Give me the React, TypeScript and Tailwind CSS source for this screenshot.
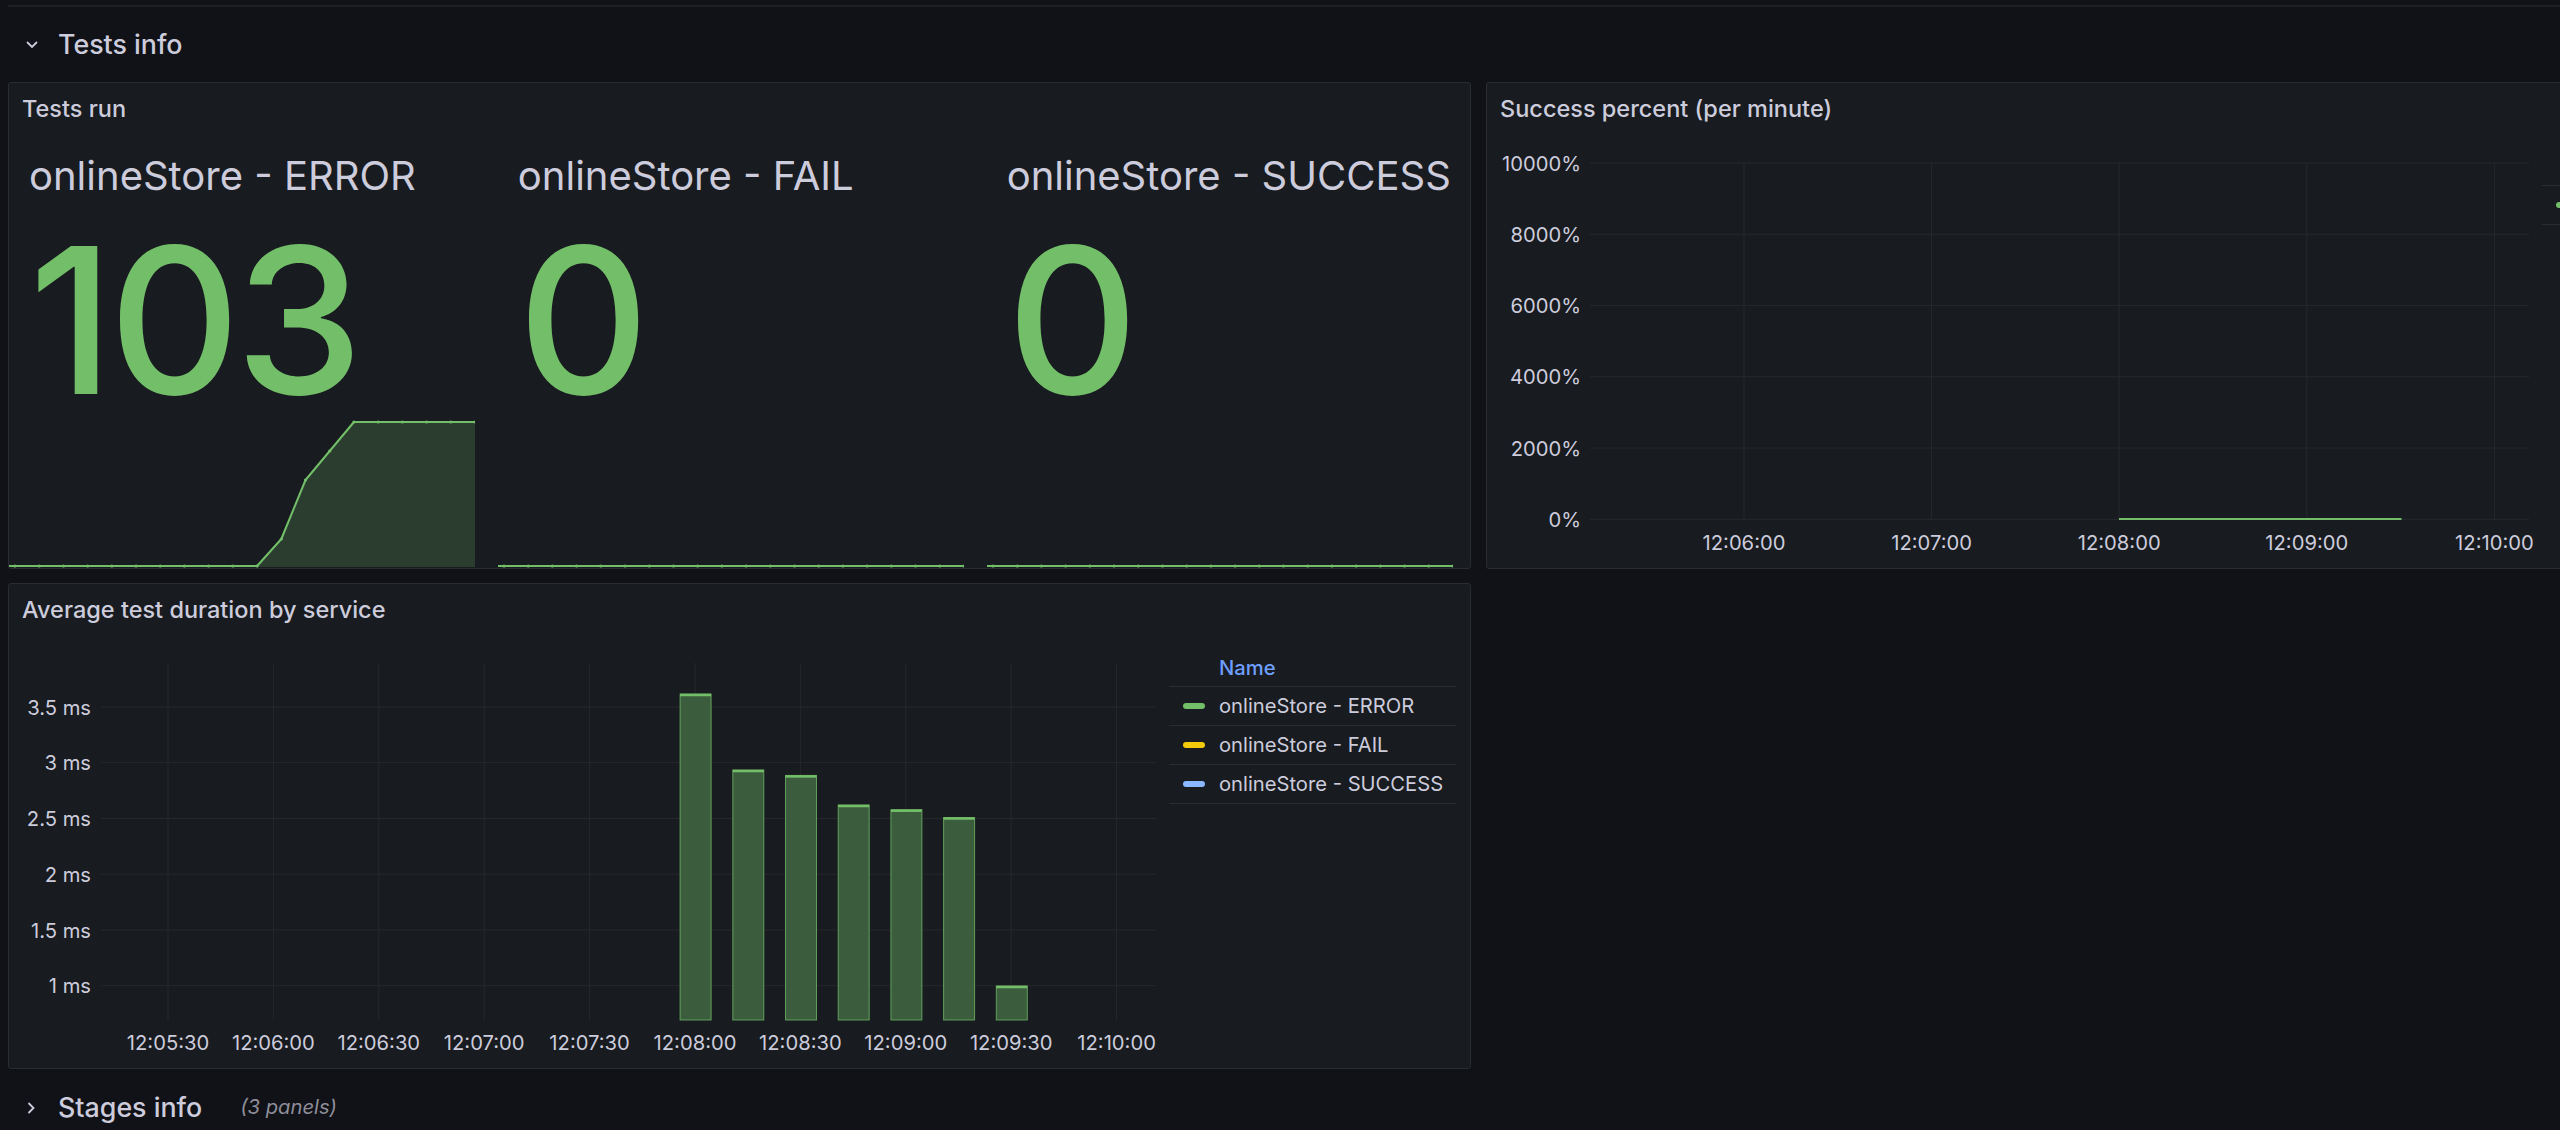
import React from "react";

const GREEN = "#73bf69";
const GRID = "#26282d";
const TEXT = "#ccccdc";

const series = [
  { name: "onlineStore - ERROR", color: "#73bf69" },
  { name: "onlineStore - FAIL", color: "#f2cc0c" },
  { name: "onlineStore - SUCCESS", color: "#8ab8ff" },
];

const successSeries = [{ name: "onlineStore", color: "#73bf69" }];

function RowHeader({ title, open, note }: { title: string; open?: boolean; note?: string }) {
  return (
    <div className="flex h-full items-center pl-[26px]">
      {open ? (
        <svg width="12" height="8" viewBox="0 0 12 8" className="mr-[20px]">
          <path d="M1.5 1.5 L6 6 L10.5 1.5" fill="none" stroke={TEXT} strokeWidth="1.8" strokeLinecap="round" />
        </svg>
      ) : (
        <svg width="9" height="12" viewBox="0 0 9 12" className="mr-[22px] ml-[1px]">
          <path d="M2 1.5 L6.5 6 L2 10.5" fill="none" stroke={TEXT} strokeWidth="1.8" strokeLinecap="round" />
        </svg>
      )}
      <span className="text-[26.8px] font-medium text-[#ccccdc]">{title}</span>
      {note && <span className="ml-[38px] text-[20.2px] italic text-[#8e8e9a]">{note}</span>}
    </div>
  );
}

function Panel({ title, children, className = "" }: { title: string; children: React.ReactNode; className?: string }) {
  return (
    <div className={`flex flex-col overflow-hidden rounded-[3px] border border-[#2a2c31] bg-[#181b1f] ${className}`}>
      <div className="flex h-[51px] shrink-0 items-center pl-[13px] text-[23.5px] font-medium text-[#ccccdc]">{title}</div>
      {children}
    </div>
  );
}

function Legend({ items }: { items: { name: string; color: string }[] }) {
  return (
    <div className="mt-[16px] w-[287px] shrink-0 text-[20.2px] text-[#ccccdc]">
      <div className="flex h-[36px] items-center border-b border-[#2a2c31] pl-[50px] font-medium text-[#6e9fff]">Name</div>
      {items.map((s) => (
        <div key={s.name} className="flex h-[39px] items-center whitespace-nowrap border-b border-[#2a2c31]">
          <span className="ml-[14px] mr-[14px] h-[6px] w-[22px] shrink-0 rounded-full" style={{ background: s.color }} />
          {s.name}
        </div>
      ))}
    </div>
  );
}

function Sparkline({ values }: { values: number[] }) {
  const xs = values.map((_, i) => 6 + 24.21 * i);
  const pts = [`0,${values[0]}`, ...values.map((v, i) => `${xs[i]},${v}`)].join(" ");
  const fill = `0,152 ${pts} ${xs[xs.length - 1]},152`;
  return (
    <svg width="466" height="153" className="mt-auto block">
      <polygon points={fill} fill="#2a3d2e" />
      <polyline points={pts} fill="none" stroke={GREEN} strokeWidth="2" strokeLinejoin="round" />
      {values.map((v, i) => (
        <circle key={i} cx={xs[i]} cy={v} r="1.6" fill={GREEN} />
      ))}
    </svg>
  );
}

const flat = Array.from({ length: 20 }, () => 151);
const errorLine = [151, 151, 151, 151, 151, 151, 151, 151, 151, 151, 151, 124, 65, 36, 7, 7, 7, 7, 7, 7];

const stats = [
  { name: "onlineStore - ERROR", value: "103", line: errorLine },
  { name: "onlineStore - FAIL", value: "0", line: flat },
  { name: "onlineStore - SUCCESS", value: "0", line: flat },
];

function TestsRun() {
  return (
    <Panel title="Tests run">
      <div className="grid flex-1 grid-cols-3 gap-x-[22.5px] pr-[17px]">
        {stats.map((s) => (
          <div key={s.name} className="flex flex-col pt-[22px]">
            <div className="h-[40px] whitespace-nowrap pl-[20px] text-[40px] leading-[40px] text-[#ccccdc]">{s.name}</div>
            <div className="mt-[29px] h-[190px] pl-[20px] text-[204px] font-medium leading-[190px] tracking-[-5px] text-[#73bf69]">{s.value}</div>
            <Sparkline values={s.line} />
          </div>
        ))}
      </div>
    </Panel>
  );
}

const axisText = { fontFamily: "Inter, sans-serif", fontSize: 20.2, fill: TEXT };

function SuccessPercent() {
  const yTicks: [string, number][] = [
    ["10000%", 29],
    ["8000%", 100.3],
    ["6000%", 171.6],
    ["4000%", 242.8],
    ["2000%", 314.1],
    ["0%", 385.3],
  ];
  const xTicks: [string, number][] = [
    ["12:06:00", 257],
    ["12:07:00", 444.6],
    ["12:08:00", 632.2],
    ["12:09:00", 819.8],
    ["12:10:00", 1007.4],
  ];
  return (
    <Panel title="Success percent (per minute)">
      <div className="flex flex-1">
        <svg width="1050" height="434" className="block shrink-0 overflow-visible">
          {yTicks.map(([l, y]) => (
            <g key={l}>
              <line x1="103" x2="1042" y1={y} y2={y} stroke={GRID} strokeWidth="1" />
              <text x="94" y={y} textAnchor="end" dominantBaseline="central" style={axisText}>
                {l}
              </text>
            </g>
          ))}
          {xTicks.map(([l, x]) => (
            <g key={l}>
              <line x1={x} x2={x} y1="29" y2="385.3" stroke={GRID} strokeWidth="1" />
              <text x={x} y="408" textAnchor="middle" dominantBaseline="central" style={axisText}>
                {l}
              </text>
            </g>
          ))}
          <line x1="632" x2="914.5" y1="385" y2="385" stroke={GREEN} strokeWidth="2" />
        </svg>
        <div className="ml-[5px]">
          <Legend items={successSeries} />
        </div>
      </div>
    </Panel>
  );
}

function AvgDuration() {
  const yTicks: [string, number][] = [
    ["3.5 ms", 72],
    ["3 ms", 127.7],
    ["2.5 ms", 183.5],
    ["2 ms", 239.2],
    ["1.5 ms", 295],
    ["1 ms", 350.7],
  ];
  const xLabels = ["12:05:30", "12:06:00", "12:06:30", "12:07:00", "12:07:30", "12:08:00", "12:08:30", "12:09:00", "12:09:30", "12:10:00"];
  const bars = [59, 135, 140.4, 170, 174.7, 182.5, 351];
  return (
    <Panel title="Average test duration by service">
      <div className="flex flex-1">
        <svg width="1150" height="433" className="block shrink-0 overflow-visible">
          {yTicks.map(([l, y]) => (
            <g key={l}>
              <line x1="92" x2="1147" y1={y} y2={y} stroke={GRID} strokeWidth="1" />
              <text x="82" y={y} textAnchor="end" dominantBaseline="central" style={axisText}>
                {l}
              </text>
            </g>
          ))}
          {xLabels.map((l, k) => {
            const x = 159 + 105.4 * k;
            return (
              <g key={l}>
                <line x1={x} x2={x} y1="28" y2="385" stroke={GRID} strokeWidth="1" />
                <text x={x} y="407" textAnchor="middle" dominantBaseline="central" style={axisText}>
                  {l}
                </text>
              </g>
            );
          })}
          {bars.map((top, j) => {
            const c = 686.6 + 52.7 * j;
            return (
              <g key={j}>
                <rect x={c - 15.5} y={top} width="31" height={385 - top} fill="#3c5d3d" stroke={GREEN} strokeOpacity="0.75" strokeWidth="1" />
                <line x1={c - 15.5} x2={c + 15.5} y1={top + 1} y2={top + 1} stroke={GREEN} strokeWidth="2.5" />
              </g>
            );
          })}
        </svg>
        <div className="ml-[10px]">
          <Legend items={series} />
        </div>
      </div>
    </Panel>
  );
}

export default function App() {
  return (
    <div className="h-[1130px] w-[2560px] overflow-hidden bg-[#111217] pt-[5px] font-[family-name:Inter,sans-serif] text-[#ccccdc]">
      <div className="ml-[8px] h-[2px] bg-[#1d1f24]" />
      <div className="h-[75px]">
        <RowHeader title="Tests info" open />
      </div>
      <div className="grid grid-cols-[1463px_1463px] grid-rows-[487px_486px] gap-x-[15px] gap-y-[14px] pl-[8px]">
        <TestsRun />
        <SuccessPercent />
        <AvgDuration />
      </div>
      <div className="h-[77px]">
        <RowHeader title="Stages info" note="(3 panels)" />
      </div>
    </div>
  );
}
